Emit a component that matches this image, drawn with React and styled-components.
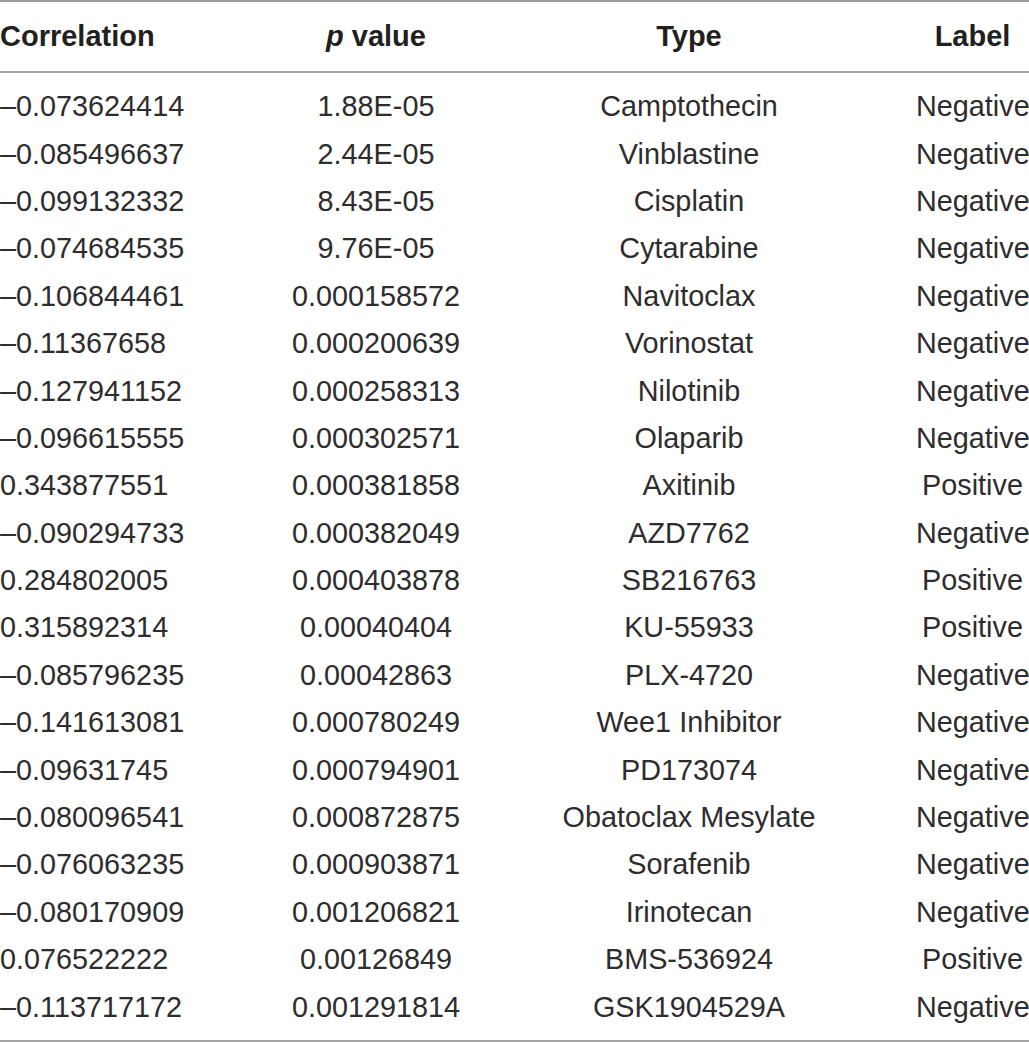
import React from 'react';
import styled, { createGlobalStyle } from 'styled-components';

const GlobalStyle = createGlobalStyle`
  html, body {
    margin: 0;
    padding: 0;
    background: #ffffff;
  }
  body {
    font-family: "Liberation Sans", Arial, sans-serif;
    color: #231f20;
  }
`;

const Table = styled.div`
  width: 1029px;
  border-top: 2px solid #9d9d9d;
  border-bottom: 2px solid #a3a3a3;
`;

const HeadRow = styled.div`
  display: grid;
  grid-template-columns: 260px 232px 394px 1fr;
  align-items: center;
  height: 69px;
  border-bottom: 2px solid #a8a8a8;
  font-size: 29px;
  font-weight: 700;
  color: #231f20;
`;

const Body = styled.div`
  padding: 10px 0 9px;
`;

const Row = styled.div`
  display: grid;
  grid-template-columns: 260px 232px 394px 1fr;
  align-items: center;
  height: 47.4px;
  font-size: 28.8px;
  color: #2e2c2d;
`;

const Cell = styled.div`
  text-align: ${p => p.$align || 'center'};
  white-space: nowrap;
  padding-left: ${p => (p.$last ? '30px' : '0')};
  width: ${p => (p.$last ? '113px' : 'auto')};
`;

const Ital = styled.span`
  font-style: italic;
`;

const rows = [
  ['\u20130.073624414', '1.88E-05', 'Camptothecin', 'Negative'],
  ['\u20130.085496637', '2.44E-05', 'Vinblastine', 'Negative'],
  ['\u20130.099132332', '8.43E-05', 'Cisplatin', 'Negative'],
  ['\u20130.074684535', '9.76E-05', 'Cytarabine', 'Negative'],
  ['\u20130.106844461', '0.000158572', 'Navitoclax', 'Negative'],
  ['\u20130.11367658', '0.000200639', 'Vorinostat', 'Negative'],
  ['\u20130.127941152', '0.000258313', 'Nilotinib', 'Negative'],
  ['\u20130.096615555', '0.000302571', 'Olaparib', 'Negative'],
  ['0.343877551', '0.000381858', 'Axitinib', 'Positive'],
  ['\u20130.090294733', '0.000382049', 'AZD7762', 'Negative'],
  ['0.284802005', '0.000403878', 'SB216763', 'Positive'],
  ['0.315892314', '0.00040404', 'KU-55933', 'Positive'],
  ['\u20130.085796235', '0.00042863', 'PLX-4720', 'Negative'],
  ['\u20130.141613081', '0.000780249', 'Wee1 Inhibitor', 'Negative'],
  ['\u20130.09631745', '0.000794901', 'PD173074', 'Negative'],
  ['\u20130.080096541', '0.000872875', 'Obatoclax Mesylate', 'Negative'],
  ['\u20130.076063235', '0.000903871', 'Sorafenib', 'Negative'],
  ['\u20130.080170909', '0.001206821', 'Irinotecan', 'Negative'],
  ['0.076522222', '0.00126849', 'BMS-536924', 'Positive'],
  ['\u20130.113717172', '0.001291814', 'GSK1904529A', 'Negative'],
];

function App() {
  return (
    <>
      <GlobalStyle />
      <Table>
        <HeadRow>
          <Cell $align="left">Correlation</Cell>
          <Cell><Ital>p</Ital> value</Cell>
          <Cell>Type</Cell>
          <Cell $last>Label</Cell>
        </HeadRow>
        <Body>
          {rows.map(r => (
            <Row key={r[2]}>
              <Cell $align="left">{r[0]}</Cell>
              <Cell>{r[1]}</Cell>
              <Cell>{r[2]}</Cell>
              <Cell $last>{r[3]}</Cell>
            </Row>
          ))}
        </Body>
      </Table>
    </>
  );
}

export default App;
